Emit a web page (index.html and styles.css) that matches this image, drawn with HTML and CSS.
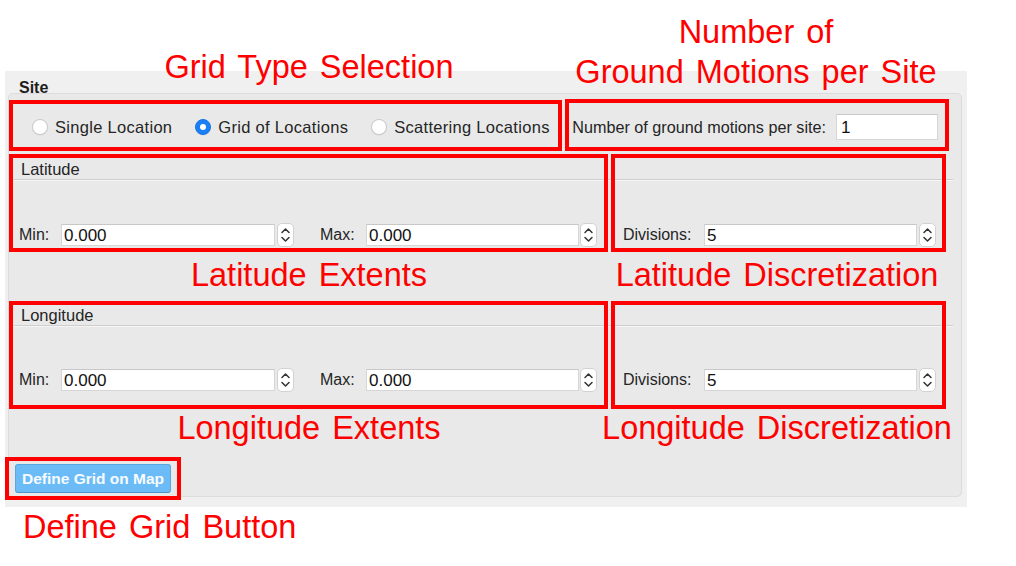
FILE: index.html
```html
<!DOCTYPE html>
<html>
<head>
<meta charset="utf-8">
<title>Site</title>
<link rel="stylesheet" href="styles.css">
</head>
<body>
<div class="panel">
  <div class="site-title">Site</div>
  <div class="group">
    <div class="row-top">
      <div class="radios">
        <span class="radio"><span class="dot"></span>Single Location</span>
        <span class="radio"><span class="dot on"></span>Grid of Locations</span>
        <span class="radio"><span class="dot"></span>Scattering Locations</span>
      </div>
      <div class="motions">
        <span>Number of ground motions per site:</span>
        <span class="field num">1</span>
      </div>
    </div>

    <section class="sec sec-lat">
      <div class="sec-head">Latitude</div>
      <div class="sec-body">
        <span class="lbl lbl-min">Min:</span><span class="field f-min">0.000</span>
        <svg class="spin" width="17" height="24" viewBox="0 0 17 24"><rect x="0.5" y="0.5" width="16" height="23" rx="4.5" fill="#fff" stroke="#d2d2d2"/><path d="M5 9.5L8.5 6L12 9.5M5 14.5L8.5 18L12 14.5" fill="none" stroke="#333" stroke-width="1.5" stroke-linecap="round" stroke-linejoin="round"/></svg>
        <span class="lbl lbl-max">Max:</span><span class="field">0.000</span>
        <svg class="spin s2" width="17" height="24" viewBox="0 0 17 24"><rect x="0.5" y="0.5" width="16" height="23" rx="4.5" fill="#fff" stroke="#d2d2d2"/><path d="M5 9.5L8.5 6L12 9.5M5 14.5L8.5 18L12 14.5" fill="none" stroke="#333" stroke-width="1.5" stroke-linecap="round" stroke-linejoin="round"/></svg>
        <span class="lbl lbl-div">Divisions:</span><span class="field">5</span>
        <svg class="spin" width="17" height="24" viewBox="0 0 17 24"><rect x="0.5" y="0.5" width="16" height="23" rx="4.5" fill="#fff" stroke="#d2d2d2"/><path d="M5 9.5L8.5 6L12 9.5M5 14.5L8.5 18L12 14.5" fill="none" stroke="#333" stroke-width="1.5" stroke-linecap="round" stroke-linejoin="round"/></svg>
      </div>
    </section>

    <div class="notes notes-lat">
      <div class="note">Latitude Extents</div>
      <div class="note">Latitude Discretization</div>
    </div>

    <section class="sec sec-lon">
      <div class="sec-head">Longitude</div>
      <div class="sec-body">
        <span class="lbl lbl-min">Min:</span><span class="field f-min">0.000</span>
        <svg class="spin" width="17" height="24" viewBox="0 0 17 24"><rect x="0.5" y="0.5" width="16" height="23" rx="4.5" fill="#fff" stroke="#d2d2d2"/><path d="M5 9.5L8.5 6L12 9.5M5 14.5L8.5 18L12 14.5" fill="none" stroke="#333" stroke-width="1.5" stroke-linecap="round" stroke-linejoin="round"/></svg>
        <span class="lbl lbl-max">Max:</span><span class="field">0.000</span>
        <svg class="spin s2" width="17" height="24" viewBox="0 0 17 24"><rect x="0.5" y="0.5" width="16" height="23" rx="4.5" fill="#fff" stroke="#d2d2d2"/><path d="M5 9.5L8.5 6L12 9.5M5 14.5L8.5 18L12 14.5" fill="none" stroke="#333" stroke-width="1.5" stroke-linecap="round" stroke-linejoin="round"/></svg>
        <span class="lbl lbl-div">Divisions:</span><span class="field">5</span>
        <svg class="spin" width="17" height="24" viewBox="0 0 17 24"><rect x="0.5" y="0.5" width="16" height="23" rx="4.5" fill="#fff" stroke="#d2d2d2"/><path d="M5 9.5L8.5 6L12 9.5M5 14.5L8.5 18L12 14.5" fill="none" stroke="#333" stroke-width="1.5" stroke-linecap="round" stroke-linejoin="round"/></svg>
      </div>
    </section>

    <div class="notes notes-lon">
      <div class="note">Longitude Extents</div>
      <div class="note">Longitude Discretization</div>
    </div>

    <button class="btn-map">Define Grid on Map</button>
  </div>
</div>
<div class="note note-bottom">Define Grid Button</div>

<div class="overlay">
  <div class="note top-type">Grid Type Selection</div>
  <div class="note top-num">Number of<br>Ground Motions per Site</div>
  <div class="rb rb-type"></div>
  <div class="rb rb-num"></div>
  <div class="rb rb-lat"></div>
  <div class="rb rb-latd"></div>
  <div class="rb rb-lon"></div>
  <div class="rb rb-lond"></div>
  <div class="rb rb-btn"></div>
</div>
</body>
</html>
```

FILE: styles.css
```css
html, body {
  margin: 0;
  padding: 0;
}
body {
  width: 1016px;
  height: 566px;
  background: #ffffff;
  position: relative;
  overflow: hidden;
  font-family: "Liberation Sans", Arial, sans-serif;
  color: #252525;
}

/* ---------- UI panel ---------- */
.panel {
  margin: 71px 0 0 5px;
  width: 962px;
  height: 436px;
  background: #f0f0f0;
  padding-top: 10px;
  box-sizing: border-box;
}
.site-title {
  font-weight: bold;
  font-size: 16px;
  line-height: 14px;
  height: 14px;
  margin-bottom: -2px;
  padding-left: 14px;
  color: #1e1e1e;
}
.group {
  margin-left: 3px;
  width: 954px;
  height: 404px;
  background: #e9e9e9;
  border: 1px solid #dcdcdc;
  border-radius: 5px;
  box-sizing: border-box;
  font-size: 16.5px;
}

.row-top {
  margin-top: 6px;
  height: 50px;
  padding-top: 4px;
  box-sizing: border-box;
  display: flex;
  align-items: center;
}
.radios {
  display: flex;
  align-items: center;
  gap: 23px;
  padding-left: 23px;
  letter-spacing: 0.3px;
}
.radio {
  display: flex;
  align-items: center;
  gap: 7px;
}
.dot {
  width: 16px;
  height: 16px;
  border-radius: 50%;
  background: #ffffff;
  border: 1px solid #c9c9c9;
  box-sizing: border-box;
  box-shadow: 0 0.5px 1px rgba(0,0,0,0.08);
  position: relative;
}
.dot.on {
  background: #1a7ff6;
  border-color: #1776e6;
}
.dot.on::after {
  content: "";
  position: absolute;
  left: 4px;
  top: 4px;
  width: 6px;
  height: 6px;
  border-radius: 50%;
  background: #ffffff;
}
.motions {
  margin-left: auto;
  margin-right: 23px;
  display: flex;
  align-items: center;
  gap: 10px;
  font-size: 16.2px;
}
.field {
  display: inline-block;
  height: 22px;
  line-height: 21px;
  background: #ffffff;
  border: 1px solid #d6d6d6;
  border-top-color: #c8c8c8;
  box-sizing: border-box;
  padding-left: 2px;
  width: 213px;
  color: #111;
  font-size: 17px;
}
.field.f-min {
  width: 214px;
}
.field.num {
  width: 102px;
  height: 26px;
  line-height: 26px;
  padding-left: 4px;
}

/* ---------- Lat / Lon sections ---------- */
.sec {
  margin-left: 5px;
  width: 939px;
}
.sec-lat {
  margin-top: 7px;
}
.sec-head {
  height: 20px;
  padding-top: 2px;
  line-height: 20px;
  padding-left: 7px;
  border-bottom: 1px solid #cfcfcf;
  box-shadow: 0 1px 0 #f5f5f5;
}
.sec-body {
  display: flex;
  align-items: center;
  padding-left: 5px;
  height: 22px;
}
.sec-lat .sec-body {
  padding-top: 44px;
}
.sec-lon .sec-body {
  padding-top: 43px;
}
.lbl {
  display: inline-block;
  font-size: 16px;
}
.lbl-min { width: 42px; }
.lbl-max { width: 46px; margin-left: 26px; }
.lbl-div { width: 81px; margin-left: 26px; }
.spin {
  display: block;
  margin-left: 2px;
  flex: none;
}
.spin.s2 {
  margin-left: 1px;
}

/* ---------- annotation labels ---------- */
.note {
  font-family: "Liberation Sans", Arial, sans-serif;
  font-size: 32.5px;
  line-height: 32px;
  color: #ff0000;
  word-spacing: 3px;
  white-space: nowrap;
}
.notes {
  display: grid;
  grid-template-columns: 600px 336px;
  justify-items: center;
}
.notes-lat {
  height: 57px;
}
.notes-lat .note {
  margin-top: 13px;
}
.notes-lon {
  height: 73px;
}
.notes-lon .note {
  margin-top: 21px;
}
.note-bottom {
  margin: 4px 0 0 23px;
}

.btn-map {
  display: block;
  margin-left: 6px;
  width: 156px;
  height: 29px;
  padding: 0;
  background: #6bbcf6;
  border: 1px solid #5aa6de;
  border-bottom-color: #4f93c8;
  border-radius: 3px;
  color: #f7fbff;
  font-family: "Liberation Sans", Arial, sans-serif;
  font-weight: bold;
  font-size: 15.5px;
  text-align: center;
}

/* ---------- overlay: red boxes and top notes ---------- */
.overlay {
  position: absolute;
  left: 0;
  top: 0;
  width: 1016px;
  height: 566px;
  pointer-events: none;
}
.top-type {
  position: absolute;
  left: 159px;
  top: 51px;
  width: 300px;
  text-align: center;
}
.top-num {
  position: absolute;
  left: 556px;
  top: 12px;
  width: 400px;
  text-align: center;
  line-height: 40px;
}
.rb {
  position: absolute;
  border: 4px solid #ff0000;
  box-sizing: border-box;
}
.rb-type  { left: 9px;   top: 100px; width: 553px; height: 51px; }
.rb-num   { left: 565px; top: 99px;  width: 384px; height: 52px; }
.rb-lat   { left: 9px;   top: 154px; width: 599px; height: 98px; }
.rb-latd  { left: 611px; top: 154px; width: 335px; height: 98px; }
.rb-lon   { left: 9px;   top: 301px; width: 599px; height: 108px; }
.rb-lond  { left: 611px; top: 301px; width: 335px; height: 108px; }
.rb-btn   { left: 5px;   top: 457px; width: 176px; height: 43px; }
```
